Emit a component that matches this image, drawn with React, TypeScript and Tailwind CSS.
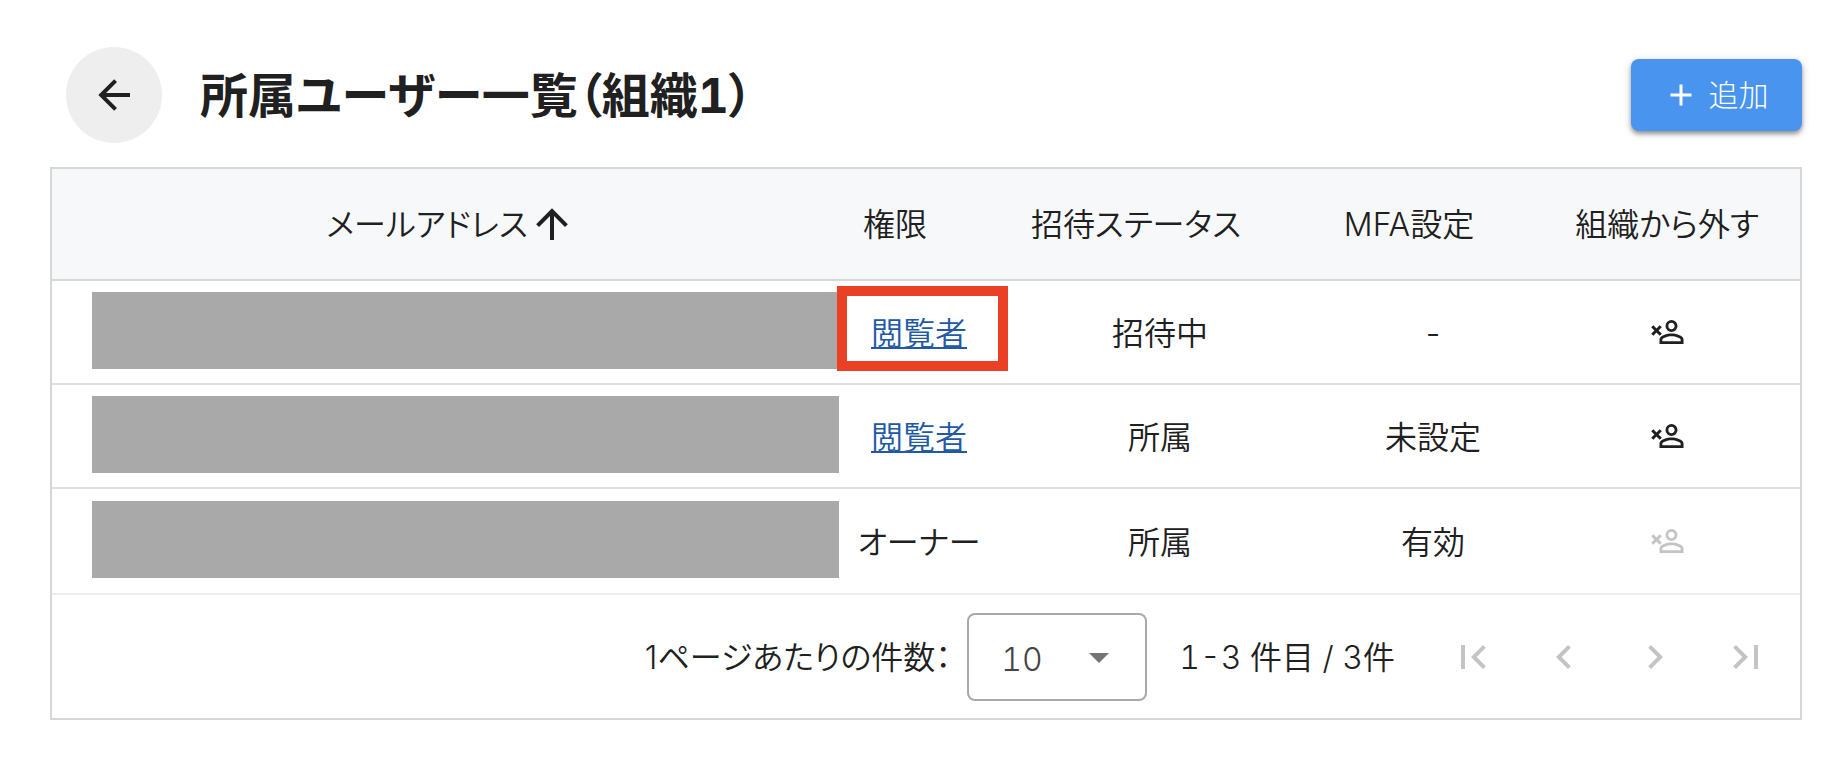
import { useState } from "react";
import { clsx } from "clsx";

interface Member {
  id: number;
  role: string;
  editable: boolean;
  highlighted?: boolean;
  status: string;
  mfa: string;
}

const members: Member[] = [
  { id: 1, role: "閲覧者", editable: true, highlighted: true, status: "招待中", mfa: "-" },
  { id: 2, role: "閲覧者", editable: true, status: "所属", mfa: "未設定" },
  { id: 3, role: "オーナー", editable: false, status: "所属", mfa: "有効" },
];

const icons = {
  arrowLeft: "M20,11V13H8L13.5,18.5L12.08,19.92L4.16,12L12.08,4.08L13.5,5.5L8,11H20Z",
  arrowUp: "M13,20H11V8L5.5,13.5L4.08,12.08L12,4.16L19.92,12.08L18.5,13.5L13,8V20Z",
  plus: "M19,13H13V19H11V13H5V11H11V5H13V11H19V13Z",
  menuDown: "M7,10L12,15L17,10H7Z",
  accountRemove:
    "M15,4A4,4 0 0,0 11,8A4,4 0 0,0 15,12A4,4 0 0,0 19,8A4,4 0 0,0 15,4M15,5.9C16.16,5.9 17.1,6.84 17.1,8C17.1,9.16 16.16,10.1 15,10.1A2.1,2.1 0 0,1 12.9,8A2.1,2.1 0 0,1 15,5.9M15,13C12.33,13 7,14.33 7,17V20H23V17C23,14.33 17.67,13 15,13M15,14.9C17.97,14.9 21.1,16.36 21.1,17V18.1H8.9V17C8.9,16.36 12,14.9 15,14.9M5,9.59L7.12,7.46L8.54,8.88L6.41,11L8.54,13.12L7.12,14.54L5,12.41L2.88,14.54L1.46,13.12L3.59,11L1.46,8.88L2.88,7.46L5,9.59Z",
  pageFirst: "M18.41,16.59L13.82,12L18.41,7.41L17,6L11,12L17,18L18.41,16.59M6,6H8V18H6V6Z",
  chevronLeft: "M15.41,16.58L10.83,12L15.41,7.41L14,6L8,12L14,18L15.41,16.58Z",
  chevronRight: "M8.59,16.58L13.17,12L8.59,7.41L10,6L16,12L10,18L8.59,16.58Z",
  pageLast: "M5.59,7.41L10.18,12L5.59,16.59L7,18L13,12L7,6L5.59,7.41M16,6H18V18H16V6Z",
};

function Icon({ name, className }: { name: keyof typeof icons; className?: string }) {
  return (
    <svg viewBox="0 0 24 24" fill="currentColor" aria-hidden="true" className={clsx("shrink-0", className)}>
      <path d={icons[name]} />
    </svg>
  );
}

const pagerButtons: { icon: keyof typeof icons; label: string }[] = [
  { icon: "pageFirst", label: "最初のページ" },
  { icon: "chevronLeft", label: "前のページ" },
  { icon: "chevronRight", label: "次のページ" },
  { icon: "pageLast", label: "最後のページ" },
];

function SortableHeader({ label, sorted }: { label: string; sorted?: boolean }) {
  return (
    <button type="button" className="mx-auto flex items-center whitespace-nowrap">
      <span className="pt-0.5">{label}</span>
      <Icon name="arrowUp" className={clsx("size-12", !sorted && "opacity-0")} />
    </button>
  );
}

export default function App() {
  const [perPage, setPerPage] = useState("10");

  return (
    <main className="bg-white pt-[47px] pr-10 pb-9 pl-[50px] font-[Inter,'Noto_Sans_CJK_JP',sans-serif] text-[32px] leading-[48px] font-[350] text-[#202020] tabular-nums [font-feature-settings:'palt']">
      {/* Title bar */}
      <header className="flex items-center pl-4">
        <button
          type="button"
          aria-label="戻る"
          className="flex size-24 items-center justify-center rounded-full bg-[#eeeeee]"
        >
          <Icon name="arrowLeft" className="size-12" />
        </button>
        <h1 className="ml-[38px] pt-0.5 text-5xl font-bold">所属ユーザー一覧（組織1）</h1>
        <button
          type="button"
          className="ml-auto flex h-[72px] w-[171px] items-center justify-center gap-2.5 rounded-lg bg-[#4894ee] pr-0.5 text-[30px] font-light text-white shadow-[0_3px_4px_rgba(0,0,0,0.35),0_2px_10px_rgba(0,0,0,0.15)]"
        >
          <Icon name="plus" className="size-9" />
          追加
        </button>
      </header>

      {/* Member table */}
      <section className="mt-6 border-2 border-[#d6d7d9]">
        <table className="w-full table-fixed border-separate border-spacing-0 text-center">
          <colgroup>
            <col />
            <col className="w-[138px]" />
            <col className="w-[344px]" />
            <col className="w-[202px]" />
            <col className="w-[266px]" />
          </colgroup>
          <thead className="bg-[#f7f8fa]">
            <tr className="*:h-28 *:border-b-2 *:border-[#d6d7d9] *:font-[350]">
              <th scope="col" aria-sort="ascending">
                <SortableHeader label="メールアドレス" sorted />
              </th>
              <th scope="col">
                <SortableHeader label="権限" />
              </th>
              <th scope="col">
                <SortableHeader label="招待ステータス" />
              </th>
              <th scope="col">
                <SortableHeader label="MFA設定" />
              </th>
              <th scope="col" className="pt-0.5">
                組織から外す
              </th>
            </tr>
          </thead>
          <tbody>
            {members.map((member) => (
              <tr
                key={member.id}
                className="*:h-[104px] *:border-b-2 *:border-[#dfdfdf] last:*:h-[106px] last:*:border-[#eeeeee]"
              >
                <td className="pr-[11px] pb-1 pl-10">
                  <div className="h-[77px] bg-[#a9a9a9]" />
                </td>
                <td className="pt-1 whitespace-nowrap">
                  {member.editable ? (
                    <span className="relative inline-block">
                      <a href="#role" className="text-[#2259a5] underline decoration-2 underline-offset-2">
                        {member.role}
                      </a>
                      {member.highlighted && (
                        <span className="pointer-events-none absolute -top-6 -right-[41px] -bottom-[13px] -left-[34px] border-10 border-[#ea4025]" />
                      )}
                    </span>
                  ) : (
                    member.role
                  )}
                </td>
                <td className="pt-1">{member.status}</td>
                <td className="pt-1">{member.mfa}</td>
                <td>
                  <button
                    type="button"
                    aria-label="組織から外す"
                    disabled={!member.editable}
                    className="mx-auto flex disabled:text-[#c4c4c4]"
                  >
                    <Icon name="accountRemove" className="size-9" />
                  </button>
                </td>
              </tr>
            ))}
          </tbody>
        </table>

        {/* Pagination */}
        <footer className="flex h-[123px] items-center justify-end pr-[30px]">
          <label htmlFor="per-page" className="pt-0.5 proportional-nums">
            1ページあたりの件数：
          </label>
          <div className="relative ml-4">
            <select
              id="per-page"
              value={perPage}
              onChange={(e) => setPerPage(e.target.value)}
              className="h-[88px] w-[180px] appearance-none rounded-lg border-2 border-[#a9a9a9] bg-white pt-1.5 pl-8 text-[#444444]"
            >
              <option>10</option>
              <option>25</option>
              <option>50</option>
            </select>
            <Icon
              name="menuDown"
              className="pointer-events-none absolute top-5 right-6 size-12 text-[#757575]"
            />
          </div>
          <span className="ml-8 pt-0.5 whitespace-nowrap">1-3 件目 / 3件</span>
          <nav className="ml-[54px] flex gap-[43px] text-[#c4c4c4]">
            {pagerButtons.map(({ icon, label }) => (
              <button key={icon} type="button" aria-label={label} disabled>
                <Icon name={icon} className="size-12" />
              </button>
            ))}
          </nav>
        </footer>
      </section>
    </main>
  );
}
